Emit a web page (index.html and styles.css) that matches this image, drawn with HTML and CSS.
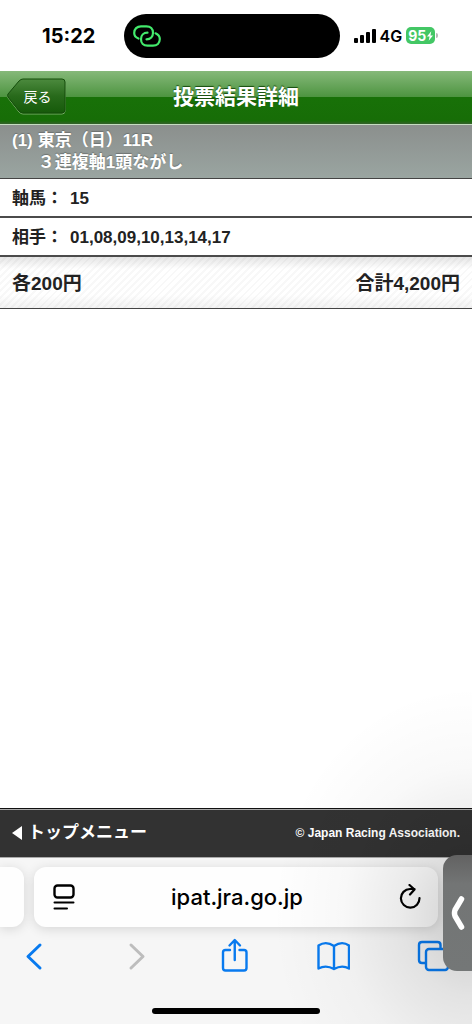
FILE: index.html
```html
<!DOCTYPE html>
<html lang="ja">
<head>
<meta charset="utf-8">
<meta name="viewport" content="width=device-width, initial-scale=1">
<title>投票結果詳細</title>
<link rel="stylesheet" href="styles.css">
</head>
<body>
<div class="screen">
  <div class="status">
    <time class="clock">15:22</time>
    <div class="island">
      <svg class="link-icon" viewBox="0 0 28 22" aria-hidden="true">
        <g fill="none" stroke="#43ea6c" stroke-width="2.2" stroke-linecap="round">
          <path d="M5.500 13.500C3 12.500 1.200 10.500 1.200 8C1.200 4 4 1.300 8 1.300H13.500C17.500 1.300 20 4 20 7.800C20 11.500 17.500 14.300 13.500 14.300"/>
          <path d="M22.500 8.300C25 9.500 26.800 11.500 26.800 14C26.800 18 24 20.700 20 20.700H14.500C10.500 20.700 8 18 8 14.200C8 10.500 10.500 7.700 14.500 7.700"/>
        </g>
      </svg>
    </div>
    <div class="signals">
      <svg class="bars" viewBox="0 0 22 14" aria-hidden="true">
        <rect x="0" y="9" width="4" height="5" rx="1"/><rect x="6" y="6" width="4" height="8" rx="1"/><rect x="12" y="3" width="4" height="11" rx="1"/><rect x="18" y="0" width="4" height="14" rx="1"/>
      </svg>
      <span class="network">4G</span>
      <span class="battery">95<svg class="bolt" viewBox="0 0 7 11" aria-hidden="true"><path d="M5 0L0 6H3L2 11L7 5H4Z" fill="#fff"/></svg></span>
    </div>
  </div>

  <header class="header">
    <button class="back" type="button">
      <svg class="back-shape" viewBox="0 0 59 37" aria-hidden="true">
        <defs><linearGradient id="back-fill" x1="0" y1="0" x2="0" y2="1"><stop offset="0" stop-color="#4c8a3e"/><stop offset=".5" stop-color="#286a1b"/><stop offset="1" stop-color="#165a0a"/></linearGradient></defs>
        <path d="M16 2H55Q58 2 58 5V33Q58 36 55 36H16Q14 36 12 34L1 20Q0 18.500 1 17L12 4Q14 2 16 2Z" fill="none" stroke="#78ac68"/>
        <path d="M16 1H55Q58 1 58 4V32Q58 35 55 35H16Q14 35 12 33L1 19Q0 17.500 1 16L12 3Q14 1 16 1Z" fill="url(#back-fill)" stroke="#144d0b"/>
      </svg>
      <span class="back-label">戻る</span>
    </button>
    <h1 class="title">投票結果詳細</h1>
  </header>

  <main class="content">
    <section class="bet">
      <h2 class="race"><span>(1)</span><span>東京（日）11R<br>３連複軸1頭ながし</span></h2>
      <dl class="picks">
        <div class="pick"><dt>軸馬：</dt><dd>15</dd></div>
        <div class="pick"><dt>相手：</dt><dd>01,08,09,10,13,14,17</dd></div>
      </dl>
      <div class="total"><span>各200円</span><span>合計4,200円</span></div>
    </section>
  </main>

  <footer class="footer">
    <a class="top-menu" href="#"><svg class="arrow" viewBox="0 0 10 14" aria-hidden="true"><path d="M10 0V14L0 7Z" fill="#fff"/></svg>トップメニュー</a>
    <small class="copyright">© Japan Racing Association.</small>
  </footer>

  <div class="browser">
    <div class="tabs">
      <div class="tab-edge"></div>
      <div class="address">
        <button class="icon-button" type="button" aria-label="ページメニュー">
          <svg class="page-icon" viewBox="0 0 22 26" fill="none" stroke="#000" stroke-width="2" stroke-linecap="round" aria-hidden="true"><rect x="1.500" y="1.500" width="19" height="12" rx="3" stroke-width="2.400"/><path d="M1.500 18.500H20.500M1.500 24.500H14"/></svg>
        </button>
        <input class="url" type="text" value="ipat.jra.go.jp" aria-label="アドレス">
        <button class="icon-button" type="button" aria-label="再読み込み">
          <svg class="reload-icon" viewBox="0 0 22 26" fill="none" stroke="#000" stroke-width="2.200" stroke-linecap="round" stroke-linejoin="round" aria-hidden="true"><path d="M20.500 14A9.300 9.300 0 1 1 11 5H15.500M10.500 1L15.500 5.500L11 10.500"/></svg>
        </button>
      </div>
    </div>
    <nav class="toolbar" aria-label="ブラウザ">
      <button class="tool" type="button" aria-label="戻る"><svg viewBox="0 0 34 36"><path d="M23 7L11 18.500L23 30" stroke-width="3"/></svg></button>
      <button class="tool tool-off" type="button" aria-label="進む" disabled><svg viewBox="0 0 34 36"><path d="M14 7L26 18.500L14 30" stroke-width="3"/></svg></button>
      <button class="tool" type="button" aria-label="共有"><svg viewBox="0 0 34 36"><path d="M13 12H8.500Q6 12 6 14.500V30Q6 32.500 8.500 32.500H27Q29.500 32.500 29.500 30V14.500Q29.500 12 27 12H22.500M17.750 22V2.500M12.500 7.500L17.750 2L23 7.500"/></svg></button>
      <button class="tool" type="button" aria-label="ブックマーク"><svg viewBox="0 0 34 36"><path d="M18 8Q10 2.500 2.500 7.500V30.500Q10 26.500 18 31Q26 26.500 33 30.500V7.500Q26 2.500 18 8V31"/></svg></button>
      <button class="tool" type="button" aria-label="タブ"><svg viewBox="0 0 34 36"><path d="M9 25H6Q3 25 3 22V7Q3 4 6 4H21.500Q24.500 4 24.500 7V10"/><rect x="10" y="11" width="22" height="21" rx="3"/></svg></button>
    </nav>
    <div class="home"></div>
    <div class="shade"></div>
    <button class="pull" type="button" aria-label="表示">
      <svg class="pull-icon" viewBox="0 0 14 34" fill="none" stroke="#fff" stroke-width="5.500" stroke-linecap="round" stroke-linejoin="round" aria-hidden="true"><path d="M10.500 3L4 14Q3 17 4 20L10.500 31"/></svg>
    </button>
  </div>
</div>
</body>
</html>
```
FILE: styles.css
```css
* { box-sizing: border-box; }
body {
  margin: 0;
  background: #fff;
  color: #222;
  font-family: "Liberation Sans", "Noto Sans CJK JP", sans-serif;
  font-weight: 700;
}
button { padding: 0; border: 0; background: none; font: inherit; color: inherit; }
h1, h2, dl, dd { margin: 0; font-size: inherit; }
svg { display: block; }

.screen { display: flex; flex-direction: column; min-height: 100vh; overflow: hidden; }

.status {
  display: grid;
  grid-template-columns: 1fr 216px 1fr;
  align-items: center;
  height: 71px;
  padding: 0 9px 0 0;
  color: #000;
  font-family: Inter, sans-serif;
}
.clock { padding-left: 14px; text-align: center; font-size: 20px; }
.island { display: flex; align-items: center; height: 44px; padding-left: 9px; border-radius: 22px; background: #000; }
.link-icon { width: 28px; height: 22px; }
.signals { display: flex; align-items: center; gap: 4px; padding-left: 14px; }
.bars { width: 22px; height: 14px; }
.network { font-size: 16px; font-weight: 600; }
.battery {
  position: relative;
  display: flex;
  align-items: center;
  gap: 1px;
  height: 17px;
  padding: 0 2px;
  border-radius: 5px;
  background: #43c765;
  color: #fff;
  font-size: 14px;
}
.battery::after { content: ""; position: absolute; right: -3px; top: 6px; width: 2px; height: 5px; border-radius: 0 2px 2px 0; background: #b8b8b8; }
.bolt { width: 6px; height: 10px; }

.header {
  display: grid;
  grid-template-columns: 66px 1fr 66px;
  align-items: center;
  height: 54px;
  padding-bottom: 2px;
  border-bottom: 1px solid #c5dcc0;
  background: linear-gradient(#86b97a 0, #4d9440 49%, #187108 50%, #176d07 94%, #35602b 100%);
}
.back { display: grid; align-items: center; margin-left: 7px; width: 59px; height: 37px; color: #fff; }
.back-shape, .back-label { grid-area: 1 / 1; }
.back-shape { width: 59px; height: 37px; }
.back-label { z-index: 1; padding-left: 2px; font-size: 14px; font-weight: 400; line-height: 20px; }
.title { text-align: center; color: #fff; font-size: 21px; line-height: 30px; text-shadow: 0 -1px 1px #164c0d; }

.content { flex: 1; }
.race {
  display: flex;
  gap: 5px;
  padding: 5px 12px 4px;
  border-bottom: 1px solid #444;
  background: linear-gradient(#8b8f8d, #9aa5a1);
  color: #fff;
  font-size: 17px;
  line-height: 22px;
  text-shadow: 0 -1px 1px #6d7270;
}
.pick {
  display: flex;
  gap: 7px;
  padding: 8px 12px 6px;
  border-bottom: 2px solid #4b4b4b;
  font-size: 17px;
  line-height: 23px;
}
.total {
  display: flex;
  justify-content: space-between;
  padding: 13px 12px 11px;
  border-bottom: 1px solid #444;
  background:
    linear-gradient(#0000001a, #0000 12px, #0000 38px, #0000000d),
    repeating-linear-gradient(135deg, #fff 0 3px, #f8f8f8 3px 5px);
  font-size: 19px;
  line-height: 27px;
}

.footer {
  display: flex;
  justify-content: space-between;
  align-items: center;
  height: 50px;
  padding: 0 12px;
  border-top: 1px solid #111;
  border-bottom: 1px solid #aaa;
  box-shadow: inset 0 1px #aaa;
  background: #323232;
  color: #fff;
}
.top-menu { display: flex; align-items: center; gap: 6px; color: inherit; font-size: 17px; line-height: 24px; text-decoration: none; }
.arrow { width: 10px; height: 14px; }
.copyright { font-size: 12px; }

.browser { position: relative; height: 166px; padding-top: 9px; background: #f6f6f6; }
.tabs { display: flex; gap: 10px; padding-right: 34px; }
.tab-edge, .address { height: 60px; background: #fefefe; box-shadow: 0 2px 12px #0002; }
.tab-edge { width: 24px; border-radius: 0 12px 12px 0; }
.address { display: flex; flex: 1; align-items: center; min-width: 0; padding: 0 17px 0 19px; border-radius: 12px; }
.icon-button { flex: none; width: 22px; }
.page-icon, .reload-icon { width: 22px; height: 26px; }
.url {
  flex: 1;
  min-width: 0;
  padding: 0;
  border: 0;
  background: none;
  color: #000;
  font: 500 22px/30px Inter, sans-serif;
  text-align: center;
}
.toolbar { display: flex; justify-content: space-between; padding: 11px 22px 0 17px; color: #087aef; }
.tool { width: 34px; height: 36px; }
.tool svg { width: 34px; height: 36px; fill: none; stroke: currentColor; stroke-width: 2.4; stroke-linecap: round; stroke-linejoin: round; }
.tool-off { color: #bdbdbd; }
.home { width: 168px; height: 6px; margin: 34px auto 0; border-radius: 3px; background: #000; }
.shade {
  position: absolute;
  right: 0;
  bottom: 0;
  width: 240px;
  height: 350px;
  background: radial-gradient(ellipse 200px 230px at 100% 69%, #00000030, #00000014 35%, #00000006 65%, #0000);
  pointer-events: none;
}
.pull {
  position: absolute;
  right: 0;
  top: -3px;
  display: grid;
  place-items: center;
  width: 29px;
  height: 116px;
  border-radius: 14px 0 0 14px;
  background: linear-gradient(#626262, #737575 25%, #747777);
}
.pull-icon { width: 14px; height: 34px; }
```
